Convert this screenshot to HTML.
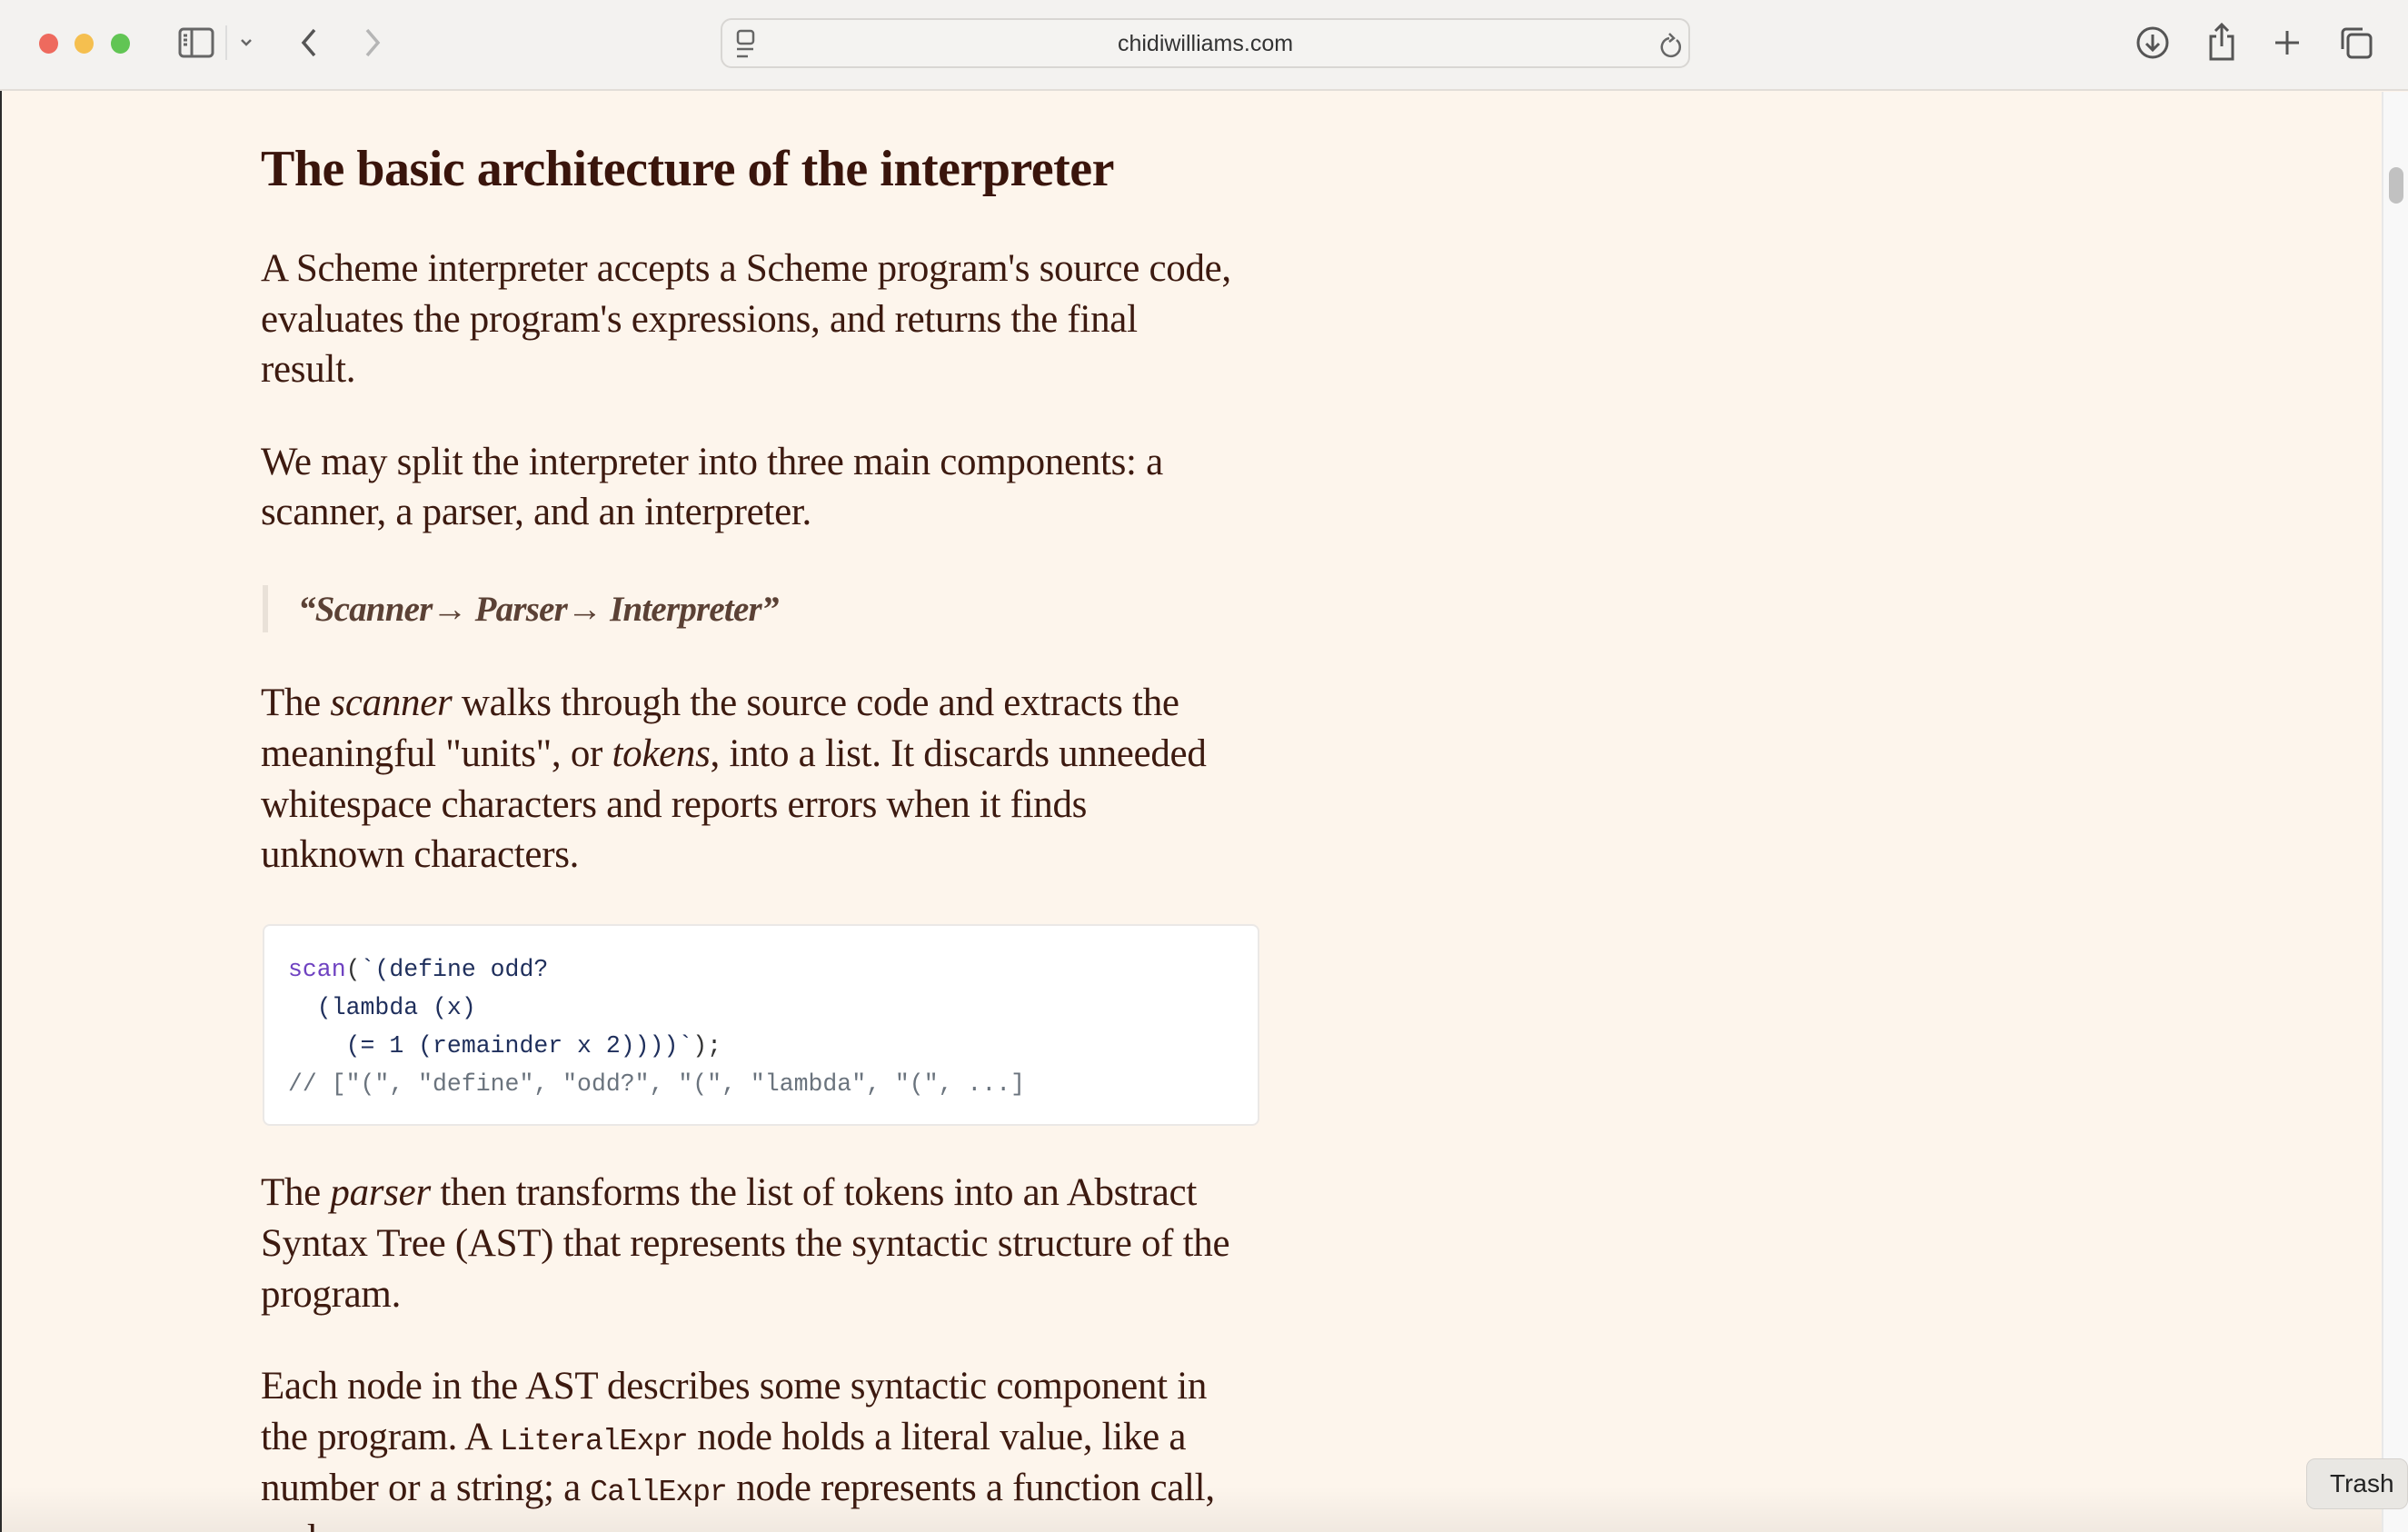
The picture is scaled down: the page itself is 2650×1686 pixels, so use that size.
<!DOCTYPE html>
<html><head><meta charset="utf-8"><style>
*{margin:0;padding:0;box-sizing:border-box}
html,body{width:2650px;height:1686px;overflow:hidden}
body{background:#fdf5ec;position:relative;font-family:"Liberation Serif",serif;color:#3d1a10}
.tb{position:absolute;left:0;top:0;width:2650px;height:100px;background:#f3f2f0;border-bottom:2px solid #e2ddd8}
.dot{position:absolute;top:37px;width:21px;height:22px;border-radius:50%}
.url{position:absolute;left:793px;top:20px;width:1067px;height:55px;border:2px solid #d8d6d3;border-radius:12px;background:#f4f3f1}
.url span{position:absolute;left:0;right:0;top:12px;text-align:center;font-family:"Liberation Sans",sans-serif;font-size:25px;color:#333}
.l{position:absolute;left:287px;white-space:nowrap;font-size:43px;line-height:56px;height:56px;letter-spacing:-0.3px}
.h{font-weight:bold;font-size:56px;line-height:64px;height:64px;color:#3a150c;letter-spacing:-0.5px}
code{font-family:"Liberation Mono",monospace;font-size:33px;color:#3d1a10;letter-spacing:-1px}
.code{position:absolute;left:289px;top:1017px;width:1097px;height:222px;background:#fff;border:2px solid #ebe8e6;border-radius:8px}
.cl{position:absolute;left:26px;font-family:"Liberation Mono",monospace;font-size:26.5px;line-height:42px;color:#1f2f5c;white-space:pre}
.sb{position:absolute;left:2621px;top:101px;width:29px;height:1585px;background:#f8f8f8;border-left:2px solid #e8e8e8}
.trash{position:absolute;left:2538px;top:1605px;width:112px;height:56px;background:#e9e7e3;border:1px solid #d5d2ce;border-radius:10px;font-family:"Liberation Sans",sans-serif;font-size:28px;line-height:54px;color:#222;padding-left:25px}
</style></head><body>
<div class="tb">
<div class="dot" style="left:43px;background:#ee6a5e"></div>
<div class="dot" style="left:82px;background:#f5bf4f"></div>
<div class="dot" style="left:122px;background:#61c554"></div>
<svg style="position:absolute;left:196px;top:30px" width="40" height="34" viewBox="0 0 40 34" fill="none" stroke="#666" stroke-width="3"><rect x="2" y="2" width="36" height="30" rx="4"/><line x1="15" y1="2" x2="15" y2="32"/><line x1="6" y1="9" x2="10" y2="9"/><line x1="6" y1="14" x2="10" y2="14"/><line x1="6" y1="19" x2="10" y2="19"/></svg>
<div style="position:absolute;left:248px;top:28px;width:2px;height:38px;background:#ddd"></div>
<svg style="position:absolute;left:264px;top:42px" width="14" height="10" viewBox="0 0 14 10" fill="none" stroke="#666" stroke-width="2.5"><path d="M2 2l5 5 5-5"/></svg>
<svg style="position:absolute;left:328px;top:30px" width="24" height="34" viewBox="0 0 24 34" fill="none" stroke="#555" stroke-width="3.5"><path d="M18 3L6 17l12 14"/></svg>
<svg style="position:absolute;left:398px;top:30px" width="24" height="34" viewBox="0 0 24 34" fill="none" stroke="#b5b5b5" stroke-width="3.5"><path d="M6 3l12 14L6 31"/></svg>
<div class="url"><svg style="position:absolute;left:14px;top:10px" width="24" height="34" viewBox="0 0 24 34" fill="none" stroke="#666" stroke-width="2.5"><rect x="3" y="2" width="17" height="14" rx="3"/><line x1="2" y1="22" x2="20" y2="22"/><line x1="2" y1="30" x2="14" y2="30"/></svg><span>chidiwilliams.com</span>
<svg style="position:absolute;left:1030px;top:12px" width="28" height="32" viewBox="0 0 28 32" fill="none" stroke="#666" stroke-width="2.5"><path d="M20 10a10 10 0 1 1-8-2"/><path d="M12 3l5 5-5 4"/></svg></div>
<svg style="position:absolute;left:2350px;top:28px" width="38" height="38" viewBox="0 0 38 38" fill="none" stroke="#555" stroke-width="3"><circle cx="19" cy="19" r="16"/><path d="M19 10v17M12 20l7 7 7-7"/></svg>
<svg style="position:absolute;left:2428px;top:24px" width="34" height="44" viewBox="0 0 34 44" fill="none" stroke="#555" stroke-width="3"><path d="M11 16H5v25h24V16h-6M17 3v24M10 10l7-7 7 7"/></svg>
<svg style="position:absolute;left:2502px;top:32px" width="30" height="30" viewBox="0 0 30 30" stroke="#555" stroke-width="3"><path d="M15 2v26M2 15h26"/></svg>
<svg style="position:absolute;left:2574px;top:28px" width="38" height="38" viewBox="0 0 38 38" fill="none" stroke="#555" stroke-width="3"><rect x="10" y="10" width="25" height="25" rx="4"/><path d="M4 26V8a4 4 0 0 1 4-4h18"/></svg>
</div>
<div style="position:absolute;left:0;top:100px;width:2px;height:1586px;background:#2b2b2b"></div>
<div class="sb"><div style="position:absolute;left:6px;top:83px;width:16px;height:40px;border-radius:8px;background:#c1c1c1"></div></div>

<div class="l h" style="top:154px">The basic architecture of the interpreter</div>
<div class="l" style="top:268px">A Scheme interpreter accepts a Scheme program's source code,</div>
<div class="l" style="top:324px">evaluates the program's expressions, and returns the final</div>
<div class="l" style="top:379px">result.</div>
<div class="l" style="top:481px">We may split the interpreter into three main components: a</div>
<div class="l" style="top:536px">scanner, a parser, and an interpreter.</div>
<div style="position:absolute;left:289px;top:644px;width:6px;height:52px;background:#e9e1d8"></div>
<div class="l" style="top:643px;left:328px;font-style:italic;color:#5b4135;font-size:39px;font-weight:bold;letter-spacing:-0.8px">“Scanner→ Parser→ Interpreter”</div>
<div class="l" style="top:746px">The <i>scanner</i> walks through the source code and extracts the</div>
<div class="l" style="top:802px">meaningful "units", or <i>tokens</i>, into a list. It discards unneeded</div>
<div class="l" style="top:858px">whitespace characters and reports errors when it finds</div>
<div class="l" style="top:913px">unknown characters.</div>
<div class="code">
<div class="cl" style="top:27px"><span style="color:#6f42c1">scan</span><span style="color:#333">(</span>`(define odd?</div>
<div class="cl" style="top:69px">  (lambda (x)</div>
<div class="cl" style="top:111px">    (= 1 (remainder x 2))))`<span style="color:#333">);</span></div>
<div class="cl" style="top:153px;color:#6a737d">// ["(", "define", "odd?", "(", "lambda", "(", ...]</div>
</div>
<div class="l" style="top:1285px">The <i>parser</i> then transforms the list of tokens into an Abstract</div>
<div class="l" style="top:1341px">Syntax Tree (AST) that represents the syntactic structure of the</div>
<div class="l" style="top:1397px">program.</div>
<div class="l" style="top:1498px">Each node in the AST describes some syntactic component in</div>
<div class="l" style="top:1554px">the program. A <code>LiteralExpr</code> node holds a literal value, like a</div>
<div class="l" style="top:1610px">number or a string; a <code>CallExpr</code> node represents a function call,</div>
<div class="l" style="top:1666px">and ...</div>
<div style="position:absolute;left:2px;top:1636px;width:2619px;height:50px;background:linear-gradient(rgba(0,0,0,0),rgba(0,0,0,0.05))"></div>
<div class="trash">Trash</div>
</body></html>
